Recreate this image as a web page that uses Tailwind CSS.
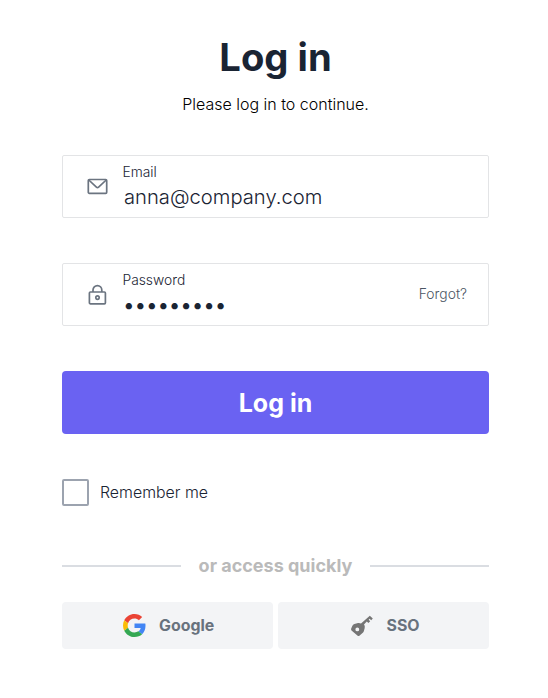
<!DOCTYPE html>
<html lang="en">
<head>
    <meta charset="UTF-8">
    <meta name="viewport" content="width=device-width, initial-scale=1.0">
    <title>Log in</title>
    <script src="https://cdn.jsdelivr.net/npm/@tailwindcss/browser@4"></script>
</head>
<body class="bg-white font-['Inter',sans-serif] text-[#1a2433]">

<main class="ml-[62px] w-[427px] pt-[33px]">
    <!-- Heading -->
    <h1 class="text-center text-[38.2px] leading-[48px] font-bold">Log in</h1>
    <p class="mt-[11px] text-center text-base leading-6 font-light text-black">Please log in to continue.</p>

    <form>
        <!-- Email -->
        <div class="mt-[39px] flex h-[63px] items-center rounded-xs border border-[#e3e4e6] pl-6 pr-[21px]">
            <svg class="h-[22px] w-[22px] shrink-0" viewBox="0 0 22 22" fill="none" stroke="#6b7480" stroke-width="1.7" stroke-linejoin="round">
                <rect x="1.3" y="3.5" width="18.4" height="13.8" rx="1"></rect>
                <path d="M1.8 4l7.6 7.1q1.1 1 2.2 0l7.6-7.1"></path>
            </svg>
            <div class="ml-[13.5px] flex-1">
                <label for="email" class="block text-[13.8px] leading-5 font-light">Email</label>
                <input id="email" type="text" value="anna@company.com" class="block h-[30px] w-full pt-[1.5px] pl-[1.5px] text-[20.2px] font-light outline-none">
            </div>
        </div>

        <!-- Password -->
        <div class="mt-[45px] flex h-[63px] items-center rounded-xs border border-[#e3e4e6] pl-6 pr-[21px]">
            <svg class="h-[22px] w-[22px] shrink-0" viewBox="0 0 22 22" fill="none" stroke="#6b7480" stroke-width="1.7" stroke-linejoin="round">
                <rect x="2.4" y="8" width="16" height="11.8" rx="1"></rect>
                <path d="M6 8V6a4.4 4.4 0 0 1 8.8 0v2"></path>
                <circle cx="10.5" cy="13.6" r="1.7"></circle>
            </svg>
            <div class="ml-[13.5px] flex-1">
                <label for="password" class="block text-[13.8px] leading-5 font-light">Password</label>
                <input id="password" type="password" value="company12" class="block h-[30px] w-full pl-px text-xl font-medium tracking-[0.8px] outline-none">
            </div>
            <a href="#" class="text-[13.9px] font-light text-[#4b5563]">Forgot?</a>
        </div>

        <button type="button" class="mt-[45px] flex h-[63px] w-full items-center justify-center rounded bg-[#6a62f2] pt-0.5 text-[25px] font-bold text-white">Log in</button>

        <!-- Remember me -->
        <label class="mt-[45px] flex h-[27px] items-center">
            <span class="h-[27px] w-[27px] rounded-xs border-2 border-[#9ca3af] bg-white"></span>
            <span class="ml-[11px] text-[15.9px] leading-[25px] font-light">Remember me</span>
        </label>
    </form>

    <!-- Divider -->
    <div class="mt-[46px] flex h-7 items-center">
        <span class="h-0.5 flex-1 bg-[#dadde2]"></span>
        <span class="px-[18px] text-lg font-bold text-[#bababa]">or access quickly</span>
        <span class="h-0.5 flex-1 bg-[#dadde2]"></span>
    </div>

    <!-- Other sign-in options -->
    <div class="mt-[22px] grid grid-cols-2 gap-[5px]">
        <button type="button" class="flex h-[47px] items-center rounded bg-[#f3f4f6] pl-[61px] text-[15.9px] font-bold text-[#68727d]">
            <svg class="h-[23px] w-[23px]" viewBox="0 0 48 48">
                <path fill="#EA4335" d="M24 9.5c3.54 0 6.71 1.22 9.21 3.6l6.85-6.85C35.9 2.38 30.47 0 24 0 14.62 0 6.51 5.38 2.56 13.22l7.98 6.19C12.43 13.72 17.74 9.5 24 9.5z"></path>
                <path fill="#4285F4" d="M46.98 24.55c0-1.57-.15-3.09-.38-4.55H24v9.02h12.94c-.58 2.96-2.26 5.48-4.78 7.18l7.73 6c4.51-4.18 7.09-10.36 7.09-17.65z"></path>
                <path fill="#FBBC05" d="M10.53 28.59c-.48-1.45-.76-2.99-.76-4.59s.27-3.14.76-4.59l-7.98-6.19C.92 16.46 0 20.12 0 24c0 3.88.92 7.54 2.56 10.78l7.97-6.19z"></path>
                <path fill="#34A853" d="M24 48c6.48 0 11.93-2.13 15.89-5.81l-7.73-6c-2.15 1.45-4.92 2.3-8.16 2.3-6.26 0-11.57-4.22-13.47-9.91l-7.98 6.19C6.51 42.62 14.62 48 24 48z"></path>
            </svg>
            <span class="ml-[13px]">Google</span>
        </button>
        <button type="button" class="flex h-[47px] items-center rounded bg-[#f3f4f6] pl-[72px] text-[15.9px] font-bold text-[#68727d]">
            <svg class="h-6 w-6" viewBox="0 0 24 24" fill="#757575">
                <path fill-rule="evenodd" d="M2.3 12Q2.8 10.4 4.4 10L8 9Q9.6 8.6 11 9.6L19.8 1.7L22.8 4.6L21.2 6.2L19.6 4.8L18.7 5.7L20.2 7.2L18.4 9L16.8 7.5L14 10.6Q15.2 12 14.7 14L13.9 17Q13.7 17.8 13.1 18.4L9.4 21.7Q8.4 22.4 7.4 21.5L1.5 16.4Q.8 15.5 1.2 14.5ZM7.3 13.5a1.9 1.9 0 1 0 0 3.8a1.9 1.9 0 1 0 0-3.8Z"></path>
            </svg>
            <span class="ml-[12.5px]">SSO</span>
        </button>
    </div>
</main>

</body>
</html>
